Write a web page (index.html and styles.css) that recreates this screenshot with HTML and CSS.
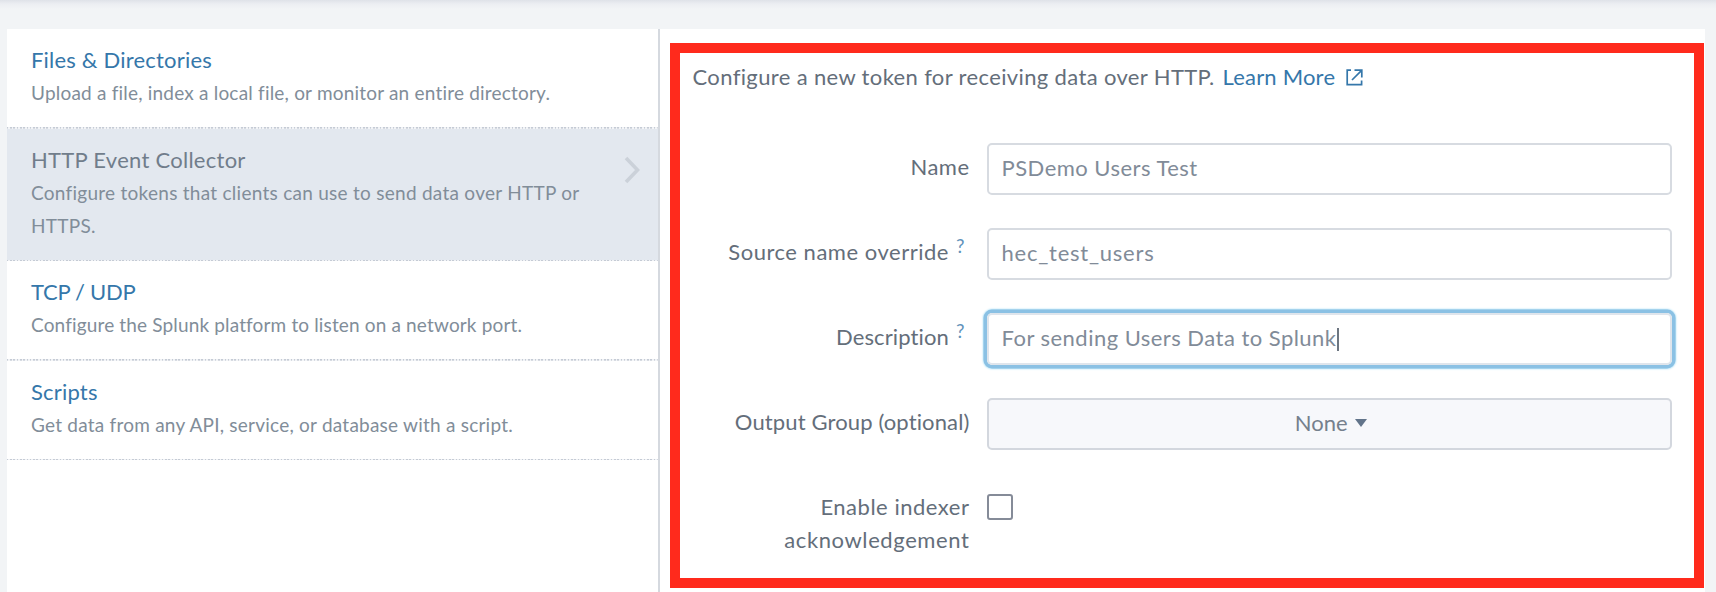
FILE: index.html
```
<!DOCTYPE html>
<html lang="en">
<head>
<meta charset="utf-8">
<title>Add Data - HTTP Event Collector</title>
<link rel="stylesheet" href="styles.css">
</head>
<body>
<div class="page">
  <nav class="sources">
    <a class="source">
      <span class="source-title ls-20">Files &amp; Directories</span>
      <span class="source-text ls-20">Upload a file, index a local file, or monitor an entire directory.</span>
    </a>
    <a class="source source-active">
      <span class="source-title ls-27">HTTP Event Collector</span>
      <span class="source-text ls-27">Configure tokens that clients can use to send data over HTTP or HTTPS.</span>
      <svg class="chevron" width="17" height="28" viewBox="0 0 17 28"><path d="M2 2 L13.5 14 L2 26" fill="none" stroke="#cbd1d9" stroke-width="3.6"/></svg>
    </a>
    <a class="source">
      <span class="source-title ls-tight">TCP / UDP</span>
      <span class="source-text ls-18">Configure the Splunk platform to listen on a network port.</span>
    </a>
    <a class="source">
      <span class="source-title ls-20">Scripts</span>
      <span class="source-text ls-22">Get data from any API, service, or database with a script.</span>
    </a>
  </nav>
  <main class="content">
    <section class="highlight">
      <p class="intro"><span class="ls-36">Configure a new token for receiving data over HTTP.</span><a class="learn ls-20">Learn More</a><svg class="external" width="17" height="17" viewBox="0 0 17 17"><path d="M5 1.2H1.2V15.6H15.6V11.5M8.5 1.2H15.8V8.5M15.4 1.6L6 11" fill="none" stroke="#3577aa" stroke-width="1.7"/></svg></p>
      <form class="form">
        <label class="label ls-48">Name</label>
        <div class="field ls-48">PSDemo Users Test</div>
        <label class="label label-help ls-53">Source name override<span class="help">?</span></label>
        <div class="field ls-76">hec_test_users</div>
        <label class="label label-help ls-13">Description<span class="help">?</span></label>
        <div class="field field-focus ls-48">For sending Users Data to Splunk<span class="cursor"></span></div>
        <label class="label ls-13">Output Group (optional)</label>
        <div class="field field-select">None<span class="caret"></span></div>
        <label class="label ls-53">Enable indexer<br><span class="ls-60">acknowledgement</span></label>
        <span class="checkbox"></span>
      </form>
    </section>
  </main>
</div>
</body>
</html>
```
FILE: styles.css
```
* { box-sizing: border-box; }
body {
  margin: 0;
  height: 592px;
  overflow: hidden;
  background: linear-gradient(#dfe2e8 0, #eceef2 4px, #f2f4f6 9px);
  font: 22px/33px Lato, "Liberation Sans", sans-serif;
  color: #646e7a;
}
.page {
  display: flex;
  height: 592px;
  padding: 29px 11px 0 7px;
}

/* Source list */
.sources {
  width: 653px;
  background: #fff;
  border-right: 2px solid #d5d9df;
}
.source {
  position: relative;
  display: block;
  height: 99.6px;
  padding: 14px 60px 0 24px;
  background: repeating-linear-gradient(90deg, #c5cbd5 0 1.65px, #f0f2f5 1.65px 3.3px) bottom / 100% 1.7px no-repeat;
}
.source-active {
  height: 132.6px;
  background-color: #e3e8ef;
}
.source-title, .source-text { display: block; }
.source-title { color: #3577aa; }
.source-active .source-title { color: #717d8b; }
.source-text {
  font-size: 19px;
  color: #818d99;
}
.chevron {
  position: absolute;
  right: 17px;
  top: 27px;
}

/* Token form */
.content {
  flex: 1;
  padding: 14px 1px 0 10px;
  background: #fff;
}
.highlight {
  height: 545px;
  padding: 7px 22px 0 12px;
  border: 10px solid #ff2a1c;
}
.intro {
  display: flex;
  margin: 0 0 50px;
  padding-left: 1px;
}
.learn { margin-left: 8px; color: #3577aa; }
.external { margin: 9px 0 0 10.5px; }
.form {
  display: grid;
  grid-template-columns: 278px 685.5px;
  grid-auto-rows: 52px;
  gap: 33px 17px;
  margin: 0;
}
.label {
  padding-top: 6.5px;
  text-align: right;
  white-space: nowrap;
}
.label-help { padding-right: 5px; }
.help {
  margin-left: 7px;
  font-size: 19px;
  line-height: 1;
  vertical-align: 7px;
  color: #5f93ba;
  letter-spacing: 0;
}
.field {
  display: flex;
  align-items: center;
  padding: 0 13px 3px;
  border: 2px solid #d7dbe1;
  border-radius: 5px;
  color: #818b98;
}
.field-focus {
  border-color: #dfe5ec;
  box-shadow: 0 0 0 3.5px #8bc1e4, 0 0 2px 4px #a5dcf5;
}
.cursor {
  width: 2px;
  height: 23px;
  margin-top: 4px;
  background: #6d7681;
}
.field-select {
  justify-content: center;
  padding-left: 16px;
  background: #f7f8fb;
  border-color: #d3d7de;
  color: #75808d;
}
.caret {
  margin: 0 0 0 7px;
  border: 6px solid transparent;
  border-top: 8px solid #62748a;
  border-bottom: 0;
}
.checkbox {
  width: 26px;
  height: 26px;
  margin-top: 11px;
  border: 2px solid #858b98;
  border-radius: 3px;
}

/* Tracking */
.ls-tight { letter-spacing: -.28px; }
.ls-13 { letter-spacing: .13px; }
.ls-18 { letter-spacing: .15px; }
.ls-20 { letter-spacing: .2px; }
.ls-22 { letter-spacing: .23px; }
.ls-27 { letter-spacing: .268px; }
.ls-36 { letter-spacing: .36px; }
.ls-48 { letter-spacing: .47px; }
.ls-53 { letter-spacing: .52px; }
.ls-60 { letter-spacing: .6px; }
.ls-76 { letter-spacing: .76px; }
```
